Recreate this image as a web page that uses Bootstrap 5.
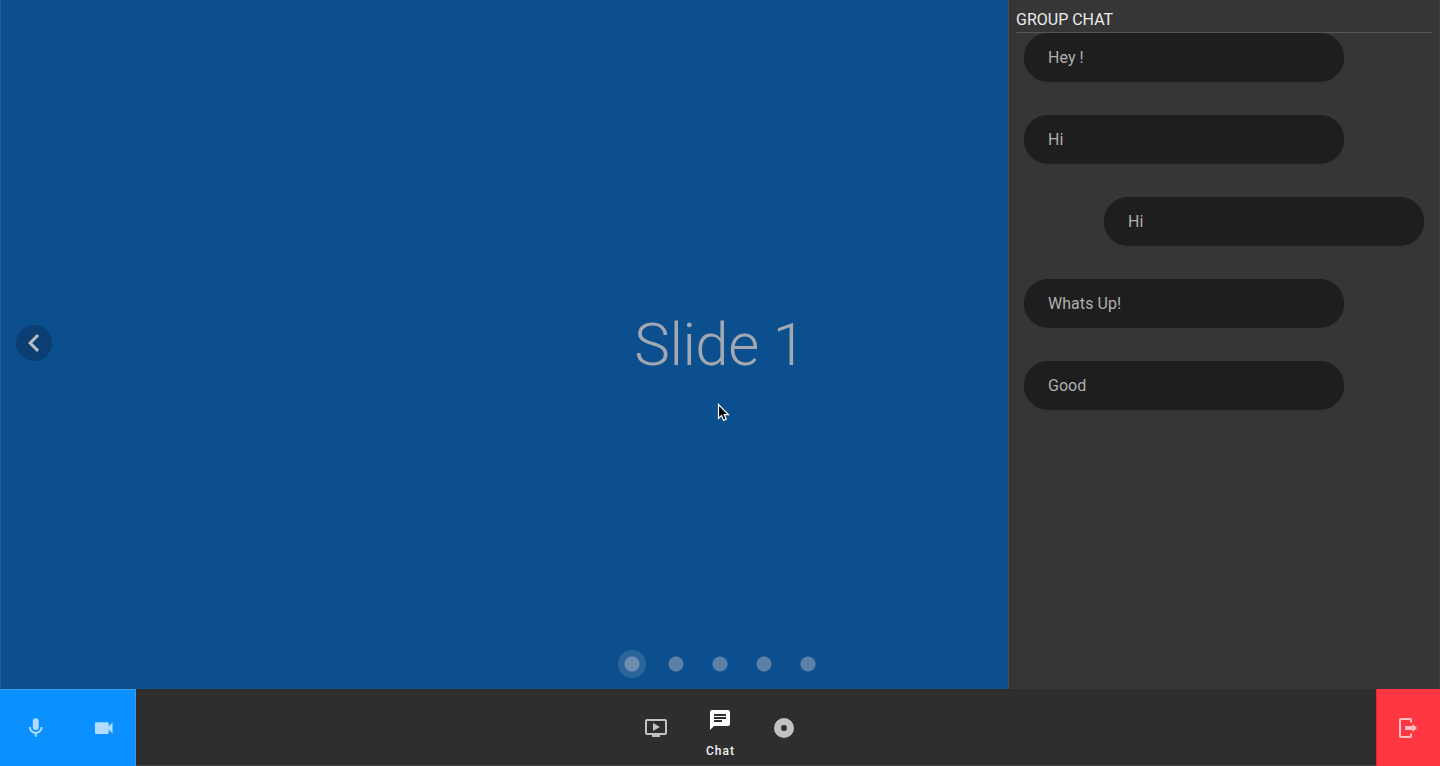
<!DOCTYPE html>
<html lang="en">
<head>
<meta charset="utf-8">
<meta name="viewport" content="width=device-width, initial-scale=1">
<title>Group Chat</title>
<link href="https://cdn.jsdelivr.net/npm/bootstrap@5.3.0/dist/css/bootstrap.min.css" rel="stylesheet">
<style>
  body { font-family: Roboto, sans-serif; background: #2e2e2e; }
  svg { display: block; }
  .stage { background: #0b4f8f; border-left: 1px solid #1f5c98; }
  .slide-area { padding-top: 50px; }
  .slide-title { font-size: 60px; font-weight: 300; letter-spacing: -.5px; line-height: 60px; color: #a3a8b0; margin-left: -1px; }
  .prev { left: 15px; width: 36px; height: 36px; margin-top: -2px; background: #0b3f73; color: #b9bec4; }
  .dots { height: 50px; gap: 16px; margin-left: -1px; }
  .dot { width: 28px; height: 28px; color: #5b7fa6; background: radial-gradient(circle at center, currentColor 7px, transparent 8px); }
  .dot.current { color: #6e8fae; background: radial-gradient(circle at center, currentColor 7px, #2c659c 8px); }
  .chat-pane { width: 432px; background: #363636; border-left: 1px solid #4a4d50; border-right: 1px solid #3a424b; padding: 8px 7px; }
  .chat-title { height: 25px; font-size: 16px; line-height: 24px; color: #ebebeb; border-bottom: 1px solid #555; }
  .thread { gap: 34px; }
  .bubble { width: 320px; height: 48px; padding-top: 2px; background: #1e1e1e; color: #afafaf; font-size: 16px; letter-spacing: .05px; box-shadow: 0 1px 1px rgba(0,0,0,.4); }
  .toolbar { height: 77px; border-bottom: 1px solid #444; }
  .media { width: 136px; padding: 0 20px 0 24px; background: #0a91ff; color: #b1dcff; margin-bottom: -1px; border-right: 1px solid #3b9be8; border-top: 1px solid #3b9be8; }
  .media svg + svg { margin-left: 44px; }
  .leave { width: 64px; background: #ff3740; color: #ffc0c3; margin-bottom: -1px; padding: 1px 1px 0 0; border-left: 1px solid #e8232b; }
  .tabs { height: 77px; color: #c2c2c2; }
  .tab-item { width: 64px; padding-top: 1px; }
  .tab-item.active { padding-top: 19px; color: #fff; }
  .tab-label { font-size: 12px; font-weight: 500; letter-spacing: 1px; line-height: 16px; margin: 11px 0 0 1px; color: #f4f4f4; }
  .pointer { left: 716px; top: 403px; }
</style>
</head>
<body>
<div class="vh-100 d-flex flex-column overflow-hidden">
  <main class="stage flex-grow-1 position-relative d-flex flex-column">
    <div class="slide-area flex-grow-1 d-flex align-items-center justify-content-center">
      <div class="slide-title">Slide 1</div>
    </div>
    <button class="prev btn p-0 border-0 rounded-circle position-absolute top-50 translate-middle-y d-flex align-items-center justify-content-center" aria-label="Previous">
      <svg width="36" height="36" viewBox="0 0 24 24" fill="currentColor"><path d="M15.41,16.58L10.83,12L15.41,7.41L14,6L8,12L14,18L15.41,16.58Z"/></svg>
    </button>
    <div class="dots d-flex justify-content-center align-items-center">
      <span class="dot current rounded-circle"></span>
      <span class="dot"></span>
      <span class="dot"></span>
      <span class="dot"></span>
      <span class="dot"></span>
    </div>
    <aside class="chat-pane position-absolute top-0 end-0 h-100">
      <div class="chat-title">GROUP CHAT</div>
      <div class="thread d-flex flex-column px-2">
        <div class="bubble rounded-pill d-flex align-items-center px-4">Hey !</div>
        <div class="bubble rounded-pill d-flex align-items-center px-4">Hi</div>
        <div class="bubble rounded-pill d-flex align-items-center px-4 align-self-end">Hi</div>
        <div class="bubble rounded-pill d-flex align-items-center px-4">Whats Up!</div>
        <div class="bubble rounded-pill d-flex align-items-center px-4">Good</div>
      </div>
    </aside>
    <svg class="pointer position-absolute" width="13" height="20" viewBox="0 0 13 20"><path d="M1.5 1.5V15.4L4.5 12.6L6.6 17.4L9.2 16.3L7.2 11.6H11.4Z" fill="#000" stroke="#fff" stroke-width="1.2"/></svg>
  </main>
  <footer class="toolbar flex-shrink-0 d-flex justify-content-between">
    <div class="media d-flex align-items-center">
      <svg width="24" height="24" viewBox="0 0 24 24" fill="currentColor"><path d="M12,2A3,3 0 0,1 15,5V11A3,3 0 0,1 12,14A3,3 0 0,1 9,11V5A3,3 0 0,1 12,2M19,11C19,14.53 16.39,17.44 13,17.93V21H11V17.93C7.61,17.44 5,14.53 5,11H7A5,5 0 0,0 12,16A5,5 0 0,0 17,11H19Z"/></svg>
      <svg width="24" height="24" viewBox="0 0 24 24" fill="currentColor"><path d="M17,10.5V7A1,1 0 0,0 16,6H4A1,1 0 0,0 3,7V17A1,1 0 0,0 4,18H16A1,1 0 0,0 17,17V13.5L21,17.5V6.5L17,10.5Z"/></svg>
    </div>
    <div class="tabs d-flex position-absolute start-50 translate-middle-x">
      <div class="tab-item d-flex align-items-center justify-content-center"><svg width="24" height="24" viewBox="0 0 24 24" fill="currentColor"><path d="M21,3H3C1.89,3 1,3.89 1,5V17A2,2 0 0,0 3,19H8V21H16V19H21A2,2 0 0,0 23,17V5C23,3.89 22.1,3 21,3M21,17H3V5H21M16,11L9,15V7"/></svg></div>
      <div class="tab-item active d-flex flex-column align-items-center"><svg width="24" height="24" viewBox="0 0 24 24" fill="currentColor"><path d="M20 2H4A2 2 0 0 0 2 4V22L6 18H20A2 2 0 0 0 22 16V4C22 2.89 21.1 2 20 2M6 9H18V11H6M14 14H6V12H14M18 8H6V6H18"/></svg><span class="tab-label">Chat</span></div>
      <div class="tab-item d-flex align-items-center justify-content-center"><svg width="24" height="24" viewBox="0 0 24 24" fill="currentColor" fill-rule="evenodd"><path d="M12 2A10 10 0 1 0 12 22A10 10 0 1 0 12 2M12 9A3 3 0 1 1 12 15A3 3 0 1 1 12 9"/></svg></div>
    </div>
    <div class="leave d-flex align-items-center justify-content-center"><svg width="24" height="24" viewBox="0 0 24 24" fill="currentColor"><path d="M16.5,16V14H9V10H16.5V8L21,12ZM5,2H14A2,2 0 0,1 16,4V6.5H14V4H5V20H14V17.5H16V20A2,2 0 0,1 14,22H5A2,2 0 0,1 3,20V4A2,2 0 0,1 5,2Z"/></svg></div>
  </footer>
</div>
<script src="https://cdn.jsdelivr.net/npm/bootstrap@5.3.0/dist/js/bootstrap.bundle.min.js"></script>
</body>
</html>
